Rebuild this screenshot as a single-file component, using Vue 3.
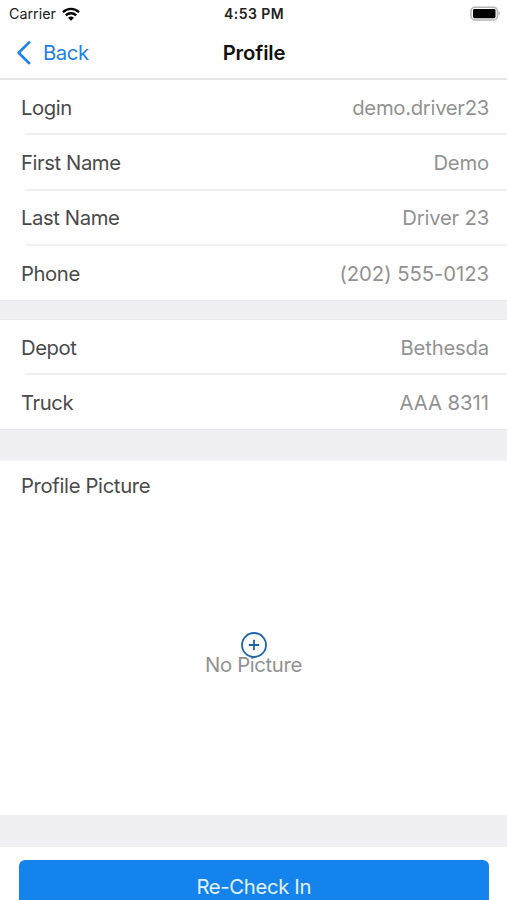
<script setup>
import { ref } from 'vue'

const account = ref([
  { label: 'Login', value: 'demo.driver23', cls: 'login' },
  { label: 'First Name', value: 'Demo' },
  { label: 'Last Name', value: 'Driver 23' },
  { label: 'Phone', value: '(202) 555-0123', cls: 'digits' }
])

const vehicle = ref([
  { label: 'Depot', value: 'Bethesda' },
  { label: 'Truck', value: 'AAA 8311', cls: 'digits' }
])
</script>

<template>
  <div class="screen">
    <div class="status-bar">
      <div class="carrier">
        <span>Carrier</span>
        <svg class="wifi" viewBox="0 0 18 14" width="18" height="14">
          <path d="M1 5.2 A11.3 11.3 0 0 1 17 5.2" />
          <path d="M3.8 8.4 A7.4 7.4 0 0 1 14.2 8.4" />
          <path class="dot" d="M9 13.7 L6 10.8 A4.4 4.4 0 0 1 12 10.8 Z" />
        </svg>
      </div>
      <div class="time">4:53 PM</div>
      <div class="battery">
        <svg viewBox="0 0 32 16" width="32" height="16">
          <rect x="2" y="1.2" width="26.4" height="12.8" rx="4" fill="#fff" stroke="#b5b5b5" stroke-width="1.5" />
          <rect x="4" y="3" width="22.5" height="9.2" rx="1.4" fill="#000" />
          <path d="M29.6 5.3 Q31.8 7.5 29.6 9.8 Z" fill="#999" />
        </svg>
      </div>
    </div>

    <div class="nav-bar">
      <div class="back">
        <svg viewBox="0 0 16 26" width="16" height="26">
          <path d="M13.2 2.4 L2.6 12.8 L13.2 23.2" />
        </svg>
        <span>Back</span>
      </div>
      <div class="title">Profile</div>
      <div class="side"></div>
    </div>

    <div class="list">
      <div class="row" v-for="item in account" :key="item.label">
        <span class="label">{{ item.label }}</span>
        <span class="value" :class="item.cls">{{ item.value }}</span>
      </div>
    </div>

    <div class="gap"></div>

    <div class="list vehicle">
      <div class="row" v-for="item in vehicle" :key="item.label">
        <span class="label">{{ item.label }}</span>
        <span class="value" :class="item.cls">{{ item.value }}</span>
      </div>
    </div>

    <div class="gap gap-mid"></div>

    <div class="picture">
      <div class="label">Profile Picture</div>
      <div class="placeholder">
        <span class="none">No Picture</span>
        <svg class="add" viewBox="0 0 26 26" width="26" height="26">
          <circle cx="13" cy="13" r="12" />
          <path d="M13 7.8 V18.2 M7.8 13 H18.2" />
        </svg>
      </div>
    </div>

    <div class="gap gap-low"></div>

    <div class="footer">
      <button class="checkin">Re-Check In</button>
    </div>
  </div>
</template>

<style>
body {
  margin: 0;
  overflow: hidden;
}
</style>

<style scoped>
.screen {
  box-sizing: border-box;
  width: 100%;
  height: 900px;
  overflow: hidden;
  background: #fff;
  font-family: Inter, "Liberation Sans", sans-serif;
  font-size: 20.3px;
  letter-spacing: -0.35px;
  color: #4a4a4a;
}

.status-bar {
  display: grid;
  grid-template-columns: 1fr auto 1fr;
  align-items: center;
  height: 27px;
  padding: 0 6px 0 9px;
  font-size: 14.3px;
  color: #222;
}

.carrier {
  display: flex;
  align-items: center;
  gap: 6px;
  letter-spacing: 0;
}

.wifi {
  fill: none;
  stroke: #000;
  stroke-width: 2.3;
}

.wifi .dot {
  fill: #000;
  stroke: none;
}

.time {
  font-size: 14px;
  font-weight: 600;
  letter-spacing: 0.45px;
  padding-right: 2px;
}

.battery {
  display: flex;
  justify-content: flex-end;
}

.nav-bar {
  display: grid;
  grid-template-columns: 1fr auto 1fr;
  align-items: center;
  height: 51px;
  padding: 0 16px;
  border-bottom: 2px solid #e6e6e6;
}

.back {
  display: flex;
  align-items: center;
  gap: 11px;
  color: #1a82e8;
  letter-spacing: -0.45px;
}

.back svg {
  fill: none;
  stroke: #1a82e8;
  stroke-width: 2.6;
  stroke-linecap: round;
  stroke-linejoin: round;
}

.title {
  font-weight: 600;
  letter-spacing: -0.15px;
  color: #111;
  padding-left: 1px;
}

.row {
  position: relative;
  display: flex;
  align-items: center;
  justify-content: space-between;
  box-sizing: border-box;
  height: 55.4px;
  padding: 0 18px 1px 21px;
}

/* hairline starts slightly inside the label */
.row + .row::before {
  content: "";
  position: absolute;
  top: -2px;
  left: 25px;
  right: 0;
  height: 2px;
  background: #f1f1f2;
}

.list {
  height: 220px;
}

.list .label {
  letter-spacing: -0.42px;
}

.vehicle {
  height: 109px;
}

.value {
  color: #929292;
  letter-spacing: -0.2px;
}

.value.login {
  letter-spacing: -0.3px;
}

.value.digits {
  letter-spacing: -0.05px;
}

.gap {
  box-sizing: border-box;
  height: 20px;
  background: #efeff4;
  border-top: 1px solid #e8e8eb;
  border-bottom: 1px solid #e8e8eb;
}

.gap-mid {
  height: 32px;
  border-bottom-color: #f4f4f6;
}

.gap-low {
  height: 32px;
  border: none;
}

.picture {
  display: flex;
  flex-direction: column;
  height: 354px;
}

.picture .label {
  padding: 12px 21px 0;
  line-height: 26px;
}

.placeholder {
  position: relative;
  flex: 1;
  display: flex;
  align-items: center;
  justify-content: center;
}

.none {
  color: #929292;
  padding-top: 15px;
}

/* add button sits over the placeholder text */
.add {
  position: absolute;
  left: 241px;
  top: 133px;
  fill: none;
  stroke: #1e65aa;
  stroke-width: 1.8;
}

.footer {
  padding: 13px 18.5px 0 19px;
}

.checkin {
  display: block;
  width: 100%;
  height: 56px;
  padding: 0 0 3px;
  border: none;
  border-radius: 6px;
  background: #1483ec;
  color: #e2f2ff;
  font: inherit;
  letter-spacing: -0.35px;
}
</style>
